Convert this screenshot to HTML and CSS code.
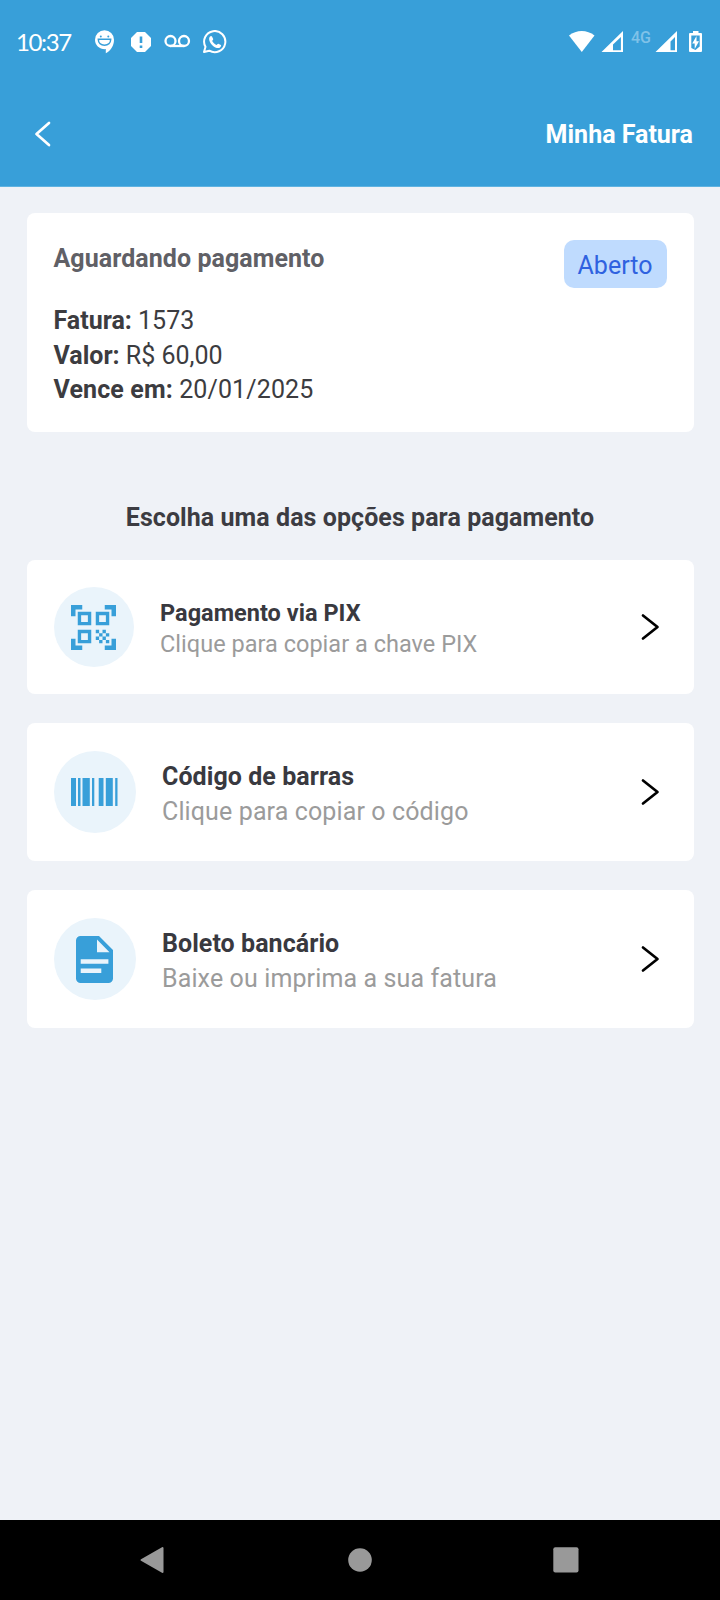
FILE: index.html
```html
<!DOCTYPE html>
<html lang="pt-BR">
<head>
<meta charset="utf-8">
<title>Minha Fatura</title>
<link rel="stylesheet" href="styles.css">
</head>
<body>
<div class="screen">
  <header class="header">
    <div class="status">
      <span class="clock">10:37</span>
      <svg class="notices" width="132" height="24" viewBox="0 0 132 24">
        <path fill="#fff" d="M9.500 0.200a9.500 9.500 0 0 1 9.500 9.500c0 6-3.300 11-8.200 13.600v-4.200C4.500 19.500 0 15.300 0 9.700A9.500 9.500 0 0 1 9.500 .2z"/>
        <circle cx="5.800" cy="6.400" r="1" fill="#389fd9"/><circle cx="13.300" cy="6.400" r="1" fill="#389fd9"/>
        <path fill="none" stroke="#389fd9" stroke-width="1.500" d="M3.300 9.300h12.400c0 3.700-2.700 5.900-6.200 5.900s-6.200-2.200-6.200-5.900z"/>
        <path fill="#fff" d="M42 2h8l6 6v8l-6 6h-8l-6-6V8z"/>
        <path stroke="#389fd9" stroke-width="2.600" d="M46 6.500v6.500M46 15.500v2.500"/>
        <g fill="none" stroke="#fff" stroke-width="2.300"><circle cx="75.500" cy="11" r="5"/><circle cx="89" cy="11" r="5"/><path d="M75.500 16H89"/></g>
        <path fill="none" stroke="#fff" stroke-width="2" stroke-linejoin="round" d="M109 22l1.500-5.200A10.600 10.600 0 1 1 114.300 20.700z"/>
        <path fill="#fff" d="M115 6.500c.7-.7 1.600-.7 2 0l1.200 2.600c.2.500-.8 1.500-1 2 1 1.900 2.300 3 4.300 3.900.6-.2 1.300-1.500 1.900-1.300l2.500 1.300c.7.400-.2 2.200-1.100 2.700-2 1.100-5-.2-7-2-2.500-2.300-5-6.700-2.800-9.200z"/>
      </svg>
      <div class="signals">
        <svg width="55" height="24" viewBox="0 0 55 24">
          <path fill="#fff" d="M0 5.500C7.300-.6 18.200-.6 25.500 5.500L12.800 22z"/>
          <path fill="#fff" fill-rule="evenodd" d="M32.500 22L54 1v21zM44 20.200h7.900V7L44 14.500z"/>
        </svg>
        <span class="network">4G</span>
        <svg width="50" height="24" viewBox="86 0 50 24">
          <path fill="#fff" fill-rule="evenodd" d="M86.500 22L108 1v21zM101.500 20.200h4.500V7L101.500 11.500z"/>
          <path fill="#fff" d="M124 1h5.500v2h2.500q1 0 1 1v17q0 1-1 1h-11q-1 0-1-1V4q0-1 1-1h3z"/>
          <path fill="#389fd9" d="M122.300 5.500h8.400v11l-4.200 3.500-4.200-2z"/>
          <path fill="#fff" d="M127.500 6l-4.300 7.500h2.500V19l4.300-7.800h-2.500z"/>
        </svg>
      </div>
    </div>
    <div class="toolbar">
      <svg class="back" width="20" height="26" viewBox="0 0 20 26"><path d="M16 2L3.500 13 16 24"/></svg>
      <h1 class="title">Minha Fatura</h1>
    </div>
  </header>

  <main class="content">
    <section class="card invoice">
      <div class="invoice-head">
        <h2 class="invoice-status">Aguardando pagamento</h2>
        <span class="badge">Aberto</span>
      </div>
      <p class="line"><b>Fatura:</b> 1573</p>
      <p class="line"><b>Valor:</b> R$ 60,00</p>
      <p class="line line-due"><b>Vence em:</b> 20/01/2025</p>
    </section>

    <h2 class="section-title">Escolha uma das opções para pagamento</h2>

    <section class="options">
      <div class="card option option-compact">
        <span class="icon">
          <svg width="45" height="45" viewBox="2 2 20 20" fill="#389fd9">
            <path d="M22 7h-2V4h-3V2h5zM22 22v-5h-2v3h-3v2zM2 22h5v-2H4v-3H2zM2 2v5h2V4h3V2z"/>
            <path fill="none" stroke="#389fd9" stroke-width="1.500" d="M5.750 5.750h4.500v4.500h-4.500zM13.750 5.750h4.500v4.500h-4.500zM5.750 13.750h4.500v4.500h-4.500z"/>
            <path d="M13 13h1.500v1.500H13zM14.500 14.500H16V16h-1.500zM16 13h1.500v1.500H16zM13 16h1.500v1.500H13zM14.500 17.500H16V19h-1.500zM16 16h1.500v1.500H16zM17.500 14.500H19V16h-1.500zM17.500 17.500H19V19h-1.500z"/>
          </svg>
        </span>
        <div class="label"><h3>Pagamento via PIX</h3><p>Clique para copiar a chave PIX</p></div>
        <svg class="chevron" width="20" height="28" viewBox="0 0 20 28"><path d="M2 2.500L16.500 14 2 25.500"/></svg>
      </div>
      <div class="card option">
        <span class="icon">
          <svg width="47" height="28" viewBox="0 0 47 28" fill="#389fd9">
            <path d="M0 0h5v28H0zM7 0h2.500v28H7zM11.500 0h7.300v28h-7.300zM21 0h2.300v28H21zM27.700 0h4.800v28h-4.800zM34.800 0h7v28h-7zM44.200 0h2.300v28h-2.300z"/>
          </svg>
        </span>
        <div class="label"><h3>Código de barras</h3><p>Clique para copiar o código</p></div>
        <svg class="chevron" width="20" height="28" viewBox="0 0 20 28"><path d="M2 2.500L16.500 14 2 25.500"/></svg>
      </div>
      <div class="card option">
        <span class="icon">
          <svg width="37" height="47" viewBox="0 0 37 47">
            <path fill="#389fd9" fill-rule="evenodd" d="M4.600 0H23l14 14v28.400a4.600 4.600 0 0 1-4.600 4.600H4.600A4.600 4.600 0 0 1 0 42.400V4.600A4.600 4.600 0 0 1 4.600 0zM21 3.500V16.300H33.500zM4.700 23.200v4.600h27.700v-4.600zM4.700 32.500v4.600h20.600v-4.600z"/>
          </svg>
        </span>
        <div class="label"><h3>Boleto bancário</h3><p>Baixe ou imprima a sua fatura</p></div>
        <svg class="chevron" width="20" height="28" viewBox="0 0 20 28"><path d="M2 2.500L16.500 14 2 25.500"/></svg>
      </div>
    </section>
  </main>

  <nav class="navbar">
    <svg width="24" height="28" viewBox="0 0 24 28"><path fill="#999" stroke="#999" stroke-width="2" stroke-linejoin="round" d="M1.500 14L22.500 2v24z"/></svg>
    <svg class="home" width="24" height="24" viewBox="0 0 24 24"><circle cx="12" cy="12" r="11.800" fill="#999"/></svg>
    <svg width="26" height="26" viewBox="0 0 26 26"><rect x=".3" y=".3" width="25.200" height="25.200" rx="2" fill="#999"/></svg>
  </nav>
</div>
</body>
</html>
```
FILE: styles.css
```css
* { box-sizing: border-box; margin: 0; }
body { font-family: Roboto, "Liberation Sans", sans-serif; background: #eff2f7; }
svg { display: block; flex: none; }
.screen { display: flex; flex-direction: column; width: 720px; height: 1600px; overflow: hidden; }

.header { height: 187px; background: #389fd9; border-bottom: 1px solid #5fb3e1; color: #fff; }
.status { display: flex; align-items: center; height: 82px; padding: 2px 15px 0 16px; }
.clock { width: 79px; font: 24px/30px Lato, sans-serif; letter-spacing: -1.400px; white-space: nowrap; }
.signals { display: flex; margin-left: auto; }
.network { width: 31px; padding-left: 7px; font-size: 16px; line-height: 15px; font-weight: 500; color: #80c2e8; white-space: nowrap; }
.toolbar { display: flex; align-items: center; justify-content: space-between; height: 104px; padding: 0 27px 0 33px; }
.back { margin-top: -1px; fill: none; stroke: #fff; stroke-width: 2.700; stroke-linecap: round; stroke-linejoin: round; }
.title { padding-top: 2px; font-size: 25px; line-height: 34px; font-weight: 700; }

.content { flex: 1; padding: 26px 26.500px 0; }
.card { background: #fff; border-radius: 8px; }
.invoice { height: 219px; padding: 27px 27px; color: #3c3c40; }
.invoice-head { display: flex; justify-content: space-between; height: 64px; }
.invoice-status { padding-top: 2px; font-size: 25px; line-height: 34px; font-weight: 700; letter-spacing: .06px; color: #606066; }
.badge { width: 103px; height: 48px; border-radius: 10px; background: #bfdbfe; color: #2f62e0; font-size: 25px; line-height: 51px; text-align: center; }
.line { font-size: 25px; line-height: 34.600px; }
.line-due { letter-spacing: .12px; }
.section-title { padding-top: 69px; font-size: 25px; line-height: 34px; font-weight: 700; letter-spacing: .06px; text-align: center; color: #3c3c42; }
.options { display: flex; flex-direction: column; gap: 29px; padding-top: 25px; }
.option { display: flex; align-items: center; height: 138px; padding: 0 33px 0 27px; }
.icon { display: grid; place-items: center; width: 82px; height: 82px; margin-right: 26.500px; border-radius: 50%; background: #eaf4fb; }
.label { flex: 1; padding-top: 6px; white-space: nowrap; }
.label h3, .label p { font-size: 25px; line-height: 34.600px; }
.label h3 { font-weight: 700; letter-spacing: .06px; color: #39393f; }
.label p { letter-spacing: .12px; color: #9b9b9b; }
.option-compact { height: 134px; }
.option-compact .icon { width: 80px; height: 80px; }
.option-compact .label { padding-top: 4px; }
.option-compact h3, .option-compact p { font-size: 23.500px; line-height: 31.500px; letter-spacing: .02px; }
.chevron { fill: none; stroke: #000; stroke-width: 2.700; stroke-linecap: round; stroke-linejoin: round; }

.navbar { display: flex; justify-content: space-between; align-items: center; height: 80px; padding: 0 141px 0 140px; background: #000; }
.home { margin-left: 3px; }
```
